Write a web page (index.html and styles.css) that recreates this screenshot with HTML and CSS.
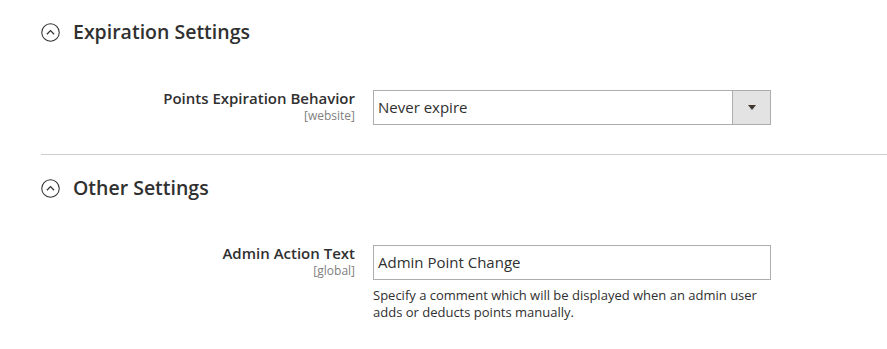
FILE: index.html
```html
<!DOCTYPE html>
<html lang="en">
<head>
  <meta charset="UTF-8">
  <title>Reward Points Configuration</title>
  <link rel="stylesheet" href="styles.css">
</head>
<body>
  <div class="section">
    <div class="section-title">
      <svg class="toggle" width="19" height="19" viewBox="0 0 20 20">
        <circle cx="10" cy="10" r="9.2" fill="none" stroke="#303030" stroke-width="1.1"/>
        <path d="M6.2 11.8 L10 8 L13.8 11.8" fill="none" stroke="#303030" stroke-width="1.3"/>
      </svg>
      <span>Expiration Settings</span>
    </div>
    <div class="field">
      <div class="label">
        <div class="label-text">Points Expiration Behavior</div>
        <div class="scope">[website]</div>
      </div>
      <div class="control">
        <div class="select">
          <span class="select-value">Never expire</span>
          <span class="select-btn"><span class="caret"></span></span>
        </div>
      </div>
    </div>
  </div>

  <div class="section bordered">
    <div class="section-title">
      <svg class="toggle" width="19" height="19" viewBox="0 0 20 20">
        <circle cx="10" cy="10" r="9.2" fill="none" stroke="#303030" stroke-width="1.1"/>
        <path d="M6.2 11.8 L10 8 L13.8 11.8" fill="none" stroke="#303030" stroke-width="1.3"/>
      </svg>
      <span>Other Settings</span>
    </div>
    <div class="field field-text">
      <div class="label">
        <div class="label-text">Admin Action Text</div>
        <div class="scope">[global]</div>
      </div>
      <div class="control">
        <div class="input">Admin Point Change</div>
        <p class="note">Specify a comment which will be displayed when an admin user adds or deducts points manually.</p>
      </div>
    </div>
  </div>
</body>
</html>
```

FILE: styles.css
```css
body {
  margin: 0;
  padding: 0 0 0 41px;
  font-family: "Open Sans", sans-serif;
  color: #303030;
  background: #fff;
}
.section {
  padding-top: 19px;
}
.bordered {
  border-top: 1px solid #cccccc;
  margin-top: 29px;
  padding-top: 20px;
}
.section-title {
  display: flex;
  align-items: center;
  gap: 13px;
  font-size: 19.5px;
  font-weight: 600;
  color: #303030;
  height: 24px;
}
.toggle {
  margin-top: 2px;
}
.field {
  display: flex;
  margin-top: 47px;
}
.field-text {
  margin-top: 46px;
}
.label {
  width: 314px;
  text-align: right;
  padding-right: 18px;
  margin-top: -1px;
}
.label-text {
  font-size: 15px;
  font-weight: 600;
  line-height: 19px;
}
.scope {
  font-size: 12px;
  color: #808080;
  line-height: 16px;
}
.control {
  width: 398px;
}
.select {
  display: flex;
  box-sizing: border-box;
  height: 35px;
  border: 1px solid #adadad;
  font-size: 15px;
}
.select-value {
  flex: 1;
  padding-left: 4px;
  line-height: 33px;
}
.select-btn {
  width: 37px;
  background: #e3e3e3;
  border-left: 1px solid #adadad;
  display: flex;
  align-items: center;
  justify-content: center;
}
.caret {
  width: 0;
  height: 0;
  border-left: 4.5px solid transparent;
  border-right: 4.5px solid transparent;
  border-top: 5px solid #41362f;
}
.input {
  box-sizing: border-box;
  height: 35px;
  border: 1px solid #adadad;
  font-size: 15px;
  line-height: 33px;
  padding-left: 4px;
}
.note {
  margin: 7px 0 0;
  font-size: 13px;
  line-height: 17px;
  color: #303030;
}
```
